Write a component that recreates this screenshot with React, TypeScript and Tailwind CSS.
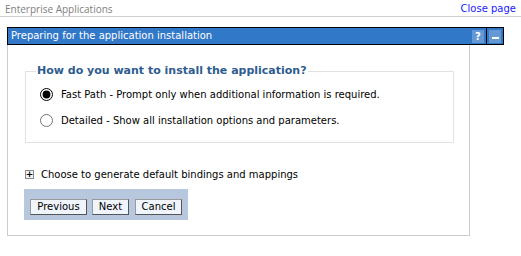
import { useState } from "react";

function App() {
  const [mode, setMode] = useState<string>("fast");

  return (
    <div className="w-[521px] h-[256px] bg-white font-['DejaVu_Sans',sans-serif] text-[10px] text-black">
      <div className="flex items-end justify-between h-[17px] border-b border-[#cfcfcf] pl-[5px] pr-[5px]">
        <span className="text-[#808080] text-[10px] leading-[14px] font-['Open_Sans',sans-serif]">
          Enterprise Applications
        </span>
        <a className="text-[#2020ff] text-[10px] leading-[14px] cursor-pointer">
          Close page
        </a>
      </div>

      <div className="ml-[7px] mt-[10px] w-[497px]">
        <div className="flex items-stretch h-[18px] bg-[#3278c8] border border-black">
          <span className="flex-1 pl-[3px] text-white text-[10px] leading-[16px]">
            Preparing for the application installation
          </span>
          <div className="flex items-center px-[2px]">
            <span className="w-[12px] h-[13px] bg-[#6599d4] text-white text-[10px] font-bold leading-[13px] text-center">
              ?
            </span>
          </div>
          <div className="flex items-center px-[2px] border-l border-black">
            <span className="w-[12px] h-[13px] bg-[#6599d4] flex items-center justify-center">
              <span className="w-[7px] h-[2px] bg-white mt-[3px]"></span>
            </span>
          </div>
        </div>

        <div className="w-[463px] h-[191px] border-x border-b border-[#cccccc] pt-[19px] pl-[17px]">
          <fieldset className="w-[429px] h-[79px] border border-[#e2e2e2] pl-[10px] pr-2 m-0">
            <legend className="px-[1px] text-[11px] font-bold text-[#2f5c8f] leading-[14px]">
              How do you want to install the application?
            </legend>
            <label className="flex items-center gap-[8px] mt-[7px] ml-[4px] h-[18px]">
              <input
                type="radio"
                name="mode"
                checked={mode === "fast"}
                onChange={() => setMode("fast")}
                className="w-[13px] h-[13px] m-0 accent-black"
              />
              <span>Fast Path - Prompt only when additional information is required.</span>
            </label>
            <label className="flex items-center gap-[8px] mt-[8px] ml-[4px] h-[18px]">
              <input
                type="radio"
                name="mode"
                checked={mode === "detailed"}
                onChange={() => setMode("detailed")}
                className="w-[13px] h-[13px] m-0 accent-black"
              />
              <span>Detailed - Show all installation options and parameters.</span>
            </label>
          </fieldset>

          <div className="flex items-center gap-[7px] mt-[23px] h-[16px]">
            <span className="w-[9px] h-[9px] border border-[#8a8a8a] bg-[#f4f4f4] flex items-center justify-center text-[9px] leading-none font-bold">
              +
            </span>
            <span>Choose to generate default bindings and mappings</span>
          </div>

          <div className="flex items-start gap-[5px] w-[164px] h-[31px] mt-[7px] -ml-[1px] bg-[#b7c7de] pl-[6px] pt-[10px]">
            <button className="w-[57px] h-[16px] bg-[#f0f4fc] border border-[#9a9a9a] border-r-[#555] border-b-[#555] text-[10px] leading-[14px]">
              Previous
            </button>
            <button className="w-[37px] h-[16px] bg-[#f0f4fc] border border-[#9a9a9a] border-r-[#555] border-b-[#555] text-[10px] leading-[14px]">
              Next
            </button>
            <button className="w-[47px] ml-[1px] h-[16px] bg-[#f0f4fc] border border-[#9a9a9a] border-r-[#555] border-b-[#555] text-[10px] leading-[14px]">
              Cancel
            </button>
          </div>
        </div>
      </div>
    </div>
  );
}

export default App;
